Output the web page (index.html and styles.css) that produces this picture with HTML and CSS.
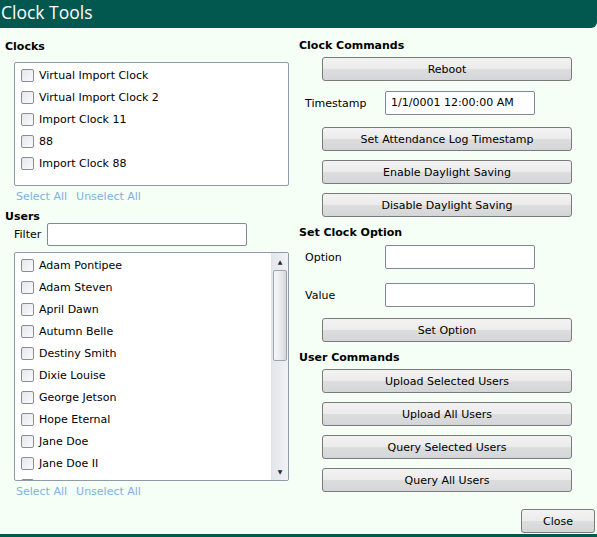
FILE: index.html
```html
<!DOCTYPE html>
<html lang="en">

<head>
	<meta charset="UTF-8">
	<title>Clock Tools</title>
	<link rel="stylesheet" href="styles.css">
</head>

<body>
	<div class="window">
		<div class="titleBar">Clock Tools</div>
		<div class="main">
			<div class="leftCol">
				<div class="heading">Clocks</div>
				<div class="list clockList">
					<div class="items">
						<label class="row"><span class="check"></span>Virtual Import Clock</label>
						<label class="row"><span class="check"></span>Virtual Import Clock 2</label>
						<label class="row"><span class="check"></span>Import Clock 11</label>
						<label class="row"><span class="check"></span>88</label>
						<label class="row"><span class="check"></span>Import Clock 88</label>
					</div>
				</div>
				<div class="links"><a>Select All</a><a>Unselect All</a></div>
				<div class="heading usersHeading">Users</div>
				<div class="filterRow">
					<span>Filter</span>
					<div class="textBox filterBox"></div>
				</div>
				<div class="list userList">
					<div class="items">
						<label class="row"><span class="check"></span>Adam Pontipee</label>
						<label class="row"><span class="check"></span>Adam Steven</label>
						<label class="row"><span class="check"></span>April Dawn</label>
						<label class="row"><span class="check"></span>Autumn Belle</label>
						<label class="row"><span class="check"></span>Destiny Smith</label>
						<label class="row"><span class="check"></span>Dixie Louise</label>
						<label class="row"><span class="check"></span>George Jetson</label>
						<label class="row"><span class="check"></span>Hope Eternal</label>
						<label class="row"><span class="check"></span>Jane Doe</label>
						<label class="row"><span class="check"></span>Jane Doe II</label>
						<div class="row"><span class="check"></span></div>
					</div>
					<div class="scrollBar">
						<div class="arrow">&#9650;</div>
						<div class="thumb"></div>
						<div class="track"></div>
						<div class="arrow">&#9660;</div>
					</div>
				</div>
				<div class="links"><a>Select All</a><a>Unselect All</a></div>
			</div>

			<div class="rightCol">
				<div class="heading">Clock Commands</div>
				<button class="btn first">Reboot</button>
				<div class="field timestampRow">
					<span>Timestamp</span>
					<div class="textBox">1/1/0001 12:00:00 AM</div>
				</div>
				<button class="btn attendance">Set Attendance Log Timestamp</button>
				<button class="btn">Enable Daylight Saving</button>
				<button class="btn">Disable Daylight Saving</button>

				<div class="heading section">Set Clock Option</div>
				<div class="field optionRow">
					<span>Option</span>
					<div class="textBox"></div>
				</div>
				<div class="field valueRow">
					<span>Value</span>
					<div class="textBox"></div>
				</div>
				<button class="btn setOption">Set Option</button>

				<div class="heading section">User Commands</div>
				<button class="btn first">Upload Selected Users</button>
				<button class="btn">Upload All Users</button>
				<button class="btn">Query Selected Users</button>
				<button class="btn">Query All Users</button>
			</div>

			<div class="footer">
				<button class="btn closeBtn">Close</button>
			</div>
		</div>
		<div class="bottomBar"></div>
	</div>
</body>

</html>
```

FILE: styles.css
```css
body,
html {
	margin: 0;
	padding: 0;
}

body {
	font-family: "DejaVu Sans", sans-serif;
	font-size: 11px;
	color: #000;
}

.window {
	width: 597px;
	height: 537px;
	display: flex;
	flex-direction: column;
	background-color: #f5fff5;
}

.titleBar {
	height: 28px;
	line-height: 24px;
	padding-left: 1px;
	background-color: #02574f;
	color: #fff;
	font-family: "Open Sans", sans-serif;
	font-size: 17.5px;
	border-bottom-right-radius: 6px;
}

.main {
	flex: 1;
	display: grid;
	grid-template-columns: 294px 1fr;
	grid-template-rows: auto 1fr;
	padding-left: 5px;
}

.bottomBar {
	height: 3px;
	background-color: #02574f;
}

.heading {
	font-weight: bold;
	line-height: 16px;
}

.leftCol {
	padding-top: 11px;
}

.rightCol {
	padding-top: 10px;
	display: flex;
	flex-direction: column;
	align-items: flex-start;
}

/* lists */

.list {
	margin-left: 9px;
	width: 275px;
	box-sizing: border-box;
	border: 1px solid #8e9aa6;
	border-radius: 2px;
	background-color: #fff;
	display: flex;
	overflow: hidden;
}

.clockList {
	margin-top: 7px;
	height: 124px;
}

.userList {
	margin-top: 6px;
	height: 229px;
}

.items {
	flex: 1;
	padding-top: 1px;
	overflow: hidden;
}

.row {
	display: flex;
	align-items: center;
	height: 22px;
	padding-left: 6px;
	white-space: nowrap;
}

.check {
	width: 11px;
	height: 11px;
	border: 1px solid #8a8e94;
	border-radius: 2px;
	background: linear-gradient(135deg, #e4e6ea, #fbfbfc);
	margin-right: 5px;
	flex: 0 0 auto;
}

.scrollBar {
	width: 16px;
	display: flex;
	flex-direction: column;
	background: linear-gradient(to right, #e3e6ea, #f0f2f4);
	border-left: 1px solid #e0e3e6;
}

.arrow {
	height: 17px;
	font-size: 6px;
	line-height: 17px;
	text-align: center;
	color: #2a2a2a;
}

.thumb {
	height: 91px;
	margin: 0 1px;
	box-sizing: border-box;
	border: 1px solid #9aa5b0;
	border-radius: 2px;
	background: linear-gradient(to right, #f6f7f8, #e6e9ec 60%, #d4d8dc);
}

.track {
	flex: 1;
}

.links {
	margin-top: 3px;
	margin-left: 11px;
	line-height: 16px;
	color: #7fb1e3;
}

.links a {
	margin-right: 9px;
}

.usersHeading {
	margin-top: 5px;
	line-height: 13px;
}

.filterRow {
	display: flex;
	align-items: center;
	margin-left: 9px;
}

.filterRow span {
	width: 33px;
}

.textBox {
	box-sizing: border-box;
	width: 150px;
	height: 24px;
	border: 1px solid #7f8a95;
	border-radius: 2px;
	background-color: #fff;
	padding: 4px 0 0 5px;
	white-space: nowrap;
}

.filterBox {
	width: 200px;
	height: 23px;
}

/* buttons */

.btn {
	box-sizing: border-box;
	width: 250px;
	height: 24px;
	margin-left: 23px;
	margin-top: 9px;
	padding: 0;
	font-family: inherit;
	font-size: 11px;
	color: #000;
	border: 1px solid #7a7a7a;
	border-radius: 3px;
	background: linear-gradient(#f3f3f3, #ebebeb 50%, #dddddd 51%, #d3d6da);
}

.btn.first {
	margin-top: 3px;
}

.field {
	display: flex;
	align-items: center;
	margin-left: 6px;
}

.field span {
	width: 80px;
}

.timestampRow {
	margin-top: 10px;
}

.btn.attendance {
	margin-top: 12px;
}

.section {
	margin-top: 8px;
}

.optionRow {
	margin-top: 4px;
}

.valueRow {
	margin-top: 14px;
}

.btn.setOption {
	margin-top: 11px;
}

.footer {
	grid-column: 1 / 3;
	display: flex;
	justify-content: flex-end;
	align-items: flex-end;
	padding-right: 2px;
	padding-bottom: 1px;
}

.closeBtn {
	width: 74px;
	margin: 0;
}
```
